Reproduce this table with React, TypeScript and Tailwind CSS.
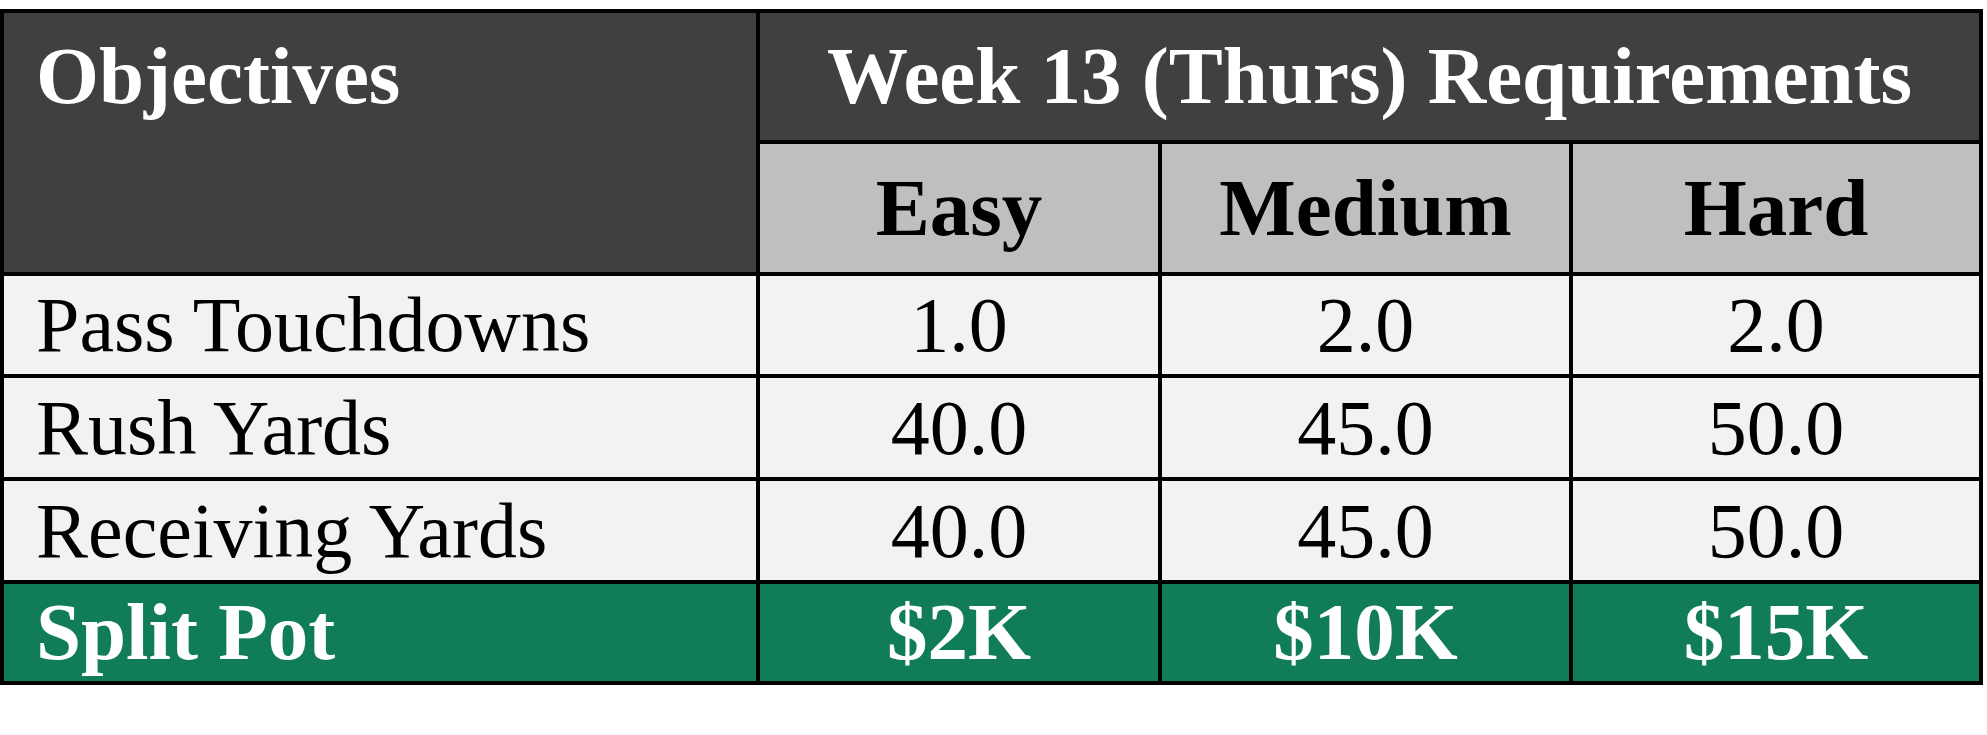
const serif = { fontFamily: '"Liberation Serif", "Times New Roman", serif' };

type Row = {
  label: string;
  easy: string;
  medium: string;
  hard: string;
};

const rows: Row[] = [
  { label: "Pass Touchdowns", easy: "1.0", medium: "2.0", hard: "2.0" },
  { label: "Rush Yards", easy: "40.0", medium: "45.0", hard: "50.0" },
  { label: "Receiving Yards", easy: "40.0", medium: "45.0", hard: "50.0" },
];

export default function App() {
  return (
    <div className="min-h-[735px] w-[1987px] bg-white pt-[9px]" style={serif}>
      <div className="grid w-[1983px] grid-cols-[752px_398px_407px_406px] grid-rows-[127px_128px_98px_99px_99px_97px] gap-[4px] border-[4px] border-black bg-black">
        {/* header */}
        <div className="row-span-2 bg-[#404040]">
          <div className="flex h-[127px] items-center pl-[32px] text-[81px] font-bold leading-none text-white">
            Objectives
          </div>
        </div>
        <div className="col-span-3 flex items-center justify-center bg-[#404040] text-[81px] font-bold leading-none text-white">
          Week 13 (Thurs) Requirements
        </div>
        {["Easy", "Medium", "Hard"].map((level) => (
          <div
            key={level}
            className="flex items-center justify-center bg-[#bfbfbf] text-[81px] font-bold leading-none text-black"
          >
            {level}
          </div>
        ))}

        {/* body */}
        {rows.map((row) => (
          <div key={row.label} className="contents">
            <div className="flex items-center bg-[#f2f2f2] pl-[32px] text-[78px] leading-none text-black">
              {row.label}
            </div>
            {[row.easy, row.medium, row.hard].map((value, i) => (
              <div
                key={i}
                className="flex items-center justify-center bg-[#f2f2f2] text-[78px] leading-none text-black"
              >
                {value}
              </div>
            ))}
          </div>
        ))}

        {/* pot */}
        <div className="flex items-center bg-[#107c5a] pl-[32px] text-[81px] font-bold leading-none text-white">
          Split Pot
        </div>
        {["$2K", "$10K", "$15K"].map((pot) => (
          <div
            key={pot}
            className="flex items-center justify-center bg-[#107c5a] text-[81px] font-bold leading-none text-white"
          >
            {pot}
          </div>
        ))}
      </div>
    </div>
  );
}
